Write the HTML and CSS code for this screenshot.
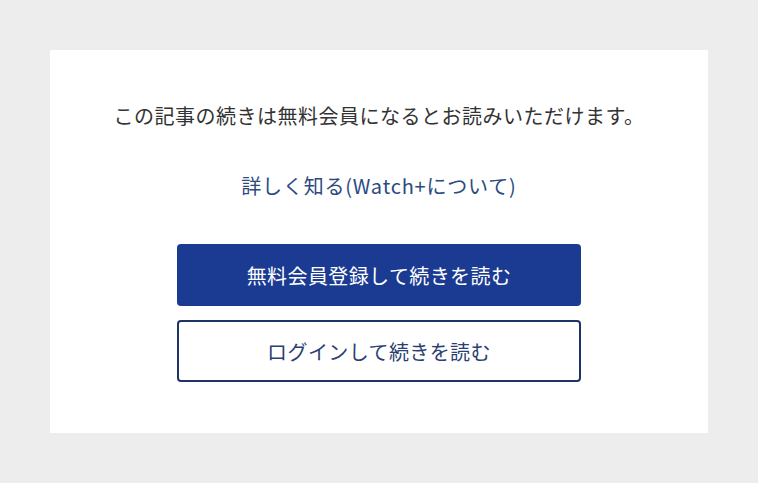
FILE: index.html
```html
<!DOCTYPE html>
<html lang="ja">
<head>
  <meta charset="UTF-8">
  <meta name="viewport" content="width=device-width, initial-scale=1.0">
  <title>続きを読む</title>
  <link rel="stylesheet" href="styles.css">
</head>
<body>
  <div class="paywall">
    <p class="lead">この記事の続きは無料会員になるとお読みいただけます。</p>
    <a class="more" href="#">詳しく知る(Watch+について)</a>
    <div class="actions">
      <a class="btn btn-primary" href="#">無料会員登録して続きを読む</a>
      <a class="btn btn-outline" href="#">ログインして続きを読む</a>
    </div>
  </div>
</body>
</html>
```

FILE: styles.css
```css
body {
  margin: 0;
  padding: 50px;
  background-color: #ededed;
  font-family: "Noto Sans CJK JP", "Noto Sans", sans-serif;
}
.paywall {
  width: 658px;
  height: 383px;
  box-sizing: border-box;
  background-color: #fff;
  padding-top: 51px;
  display: flex;
  flex-direction: column;
  align-items: center;
}
.lead {
  margin: 0;
  font-size: 20px;
  line-height: 30px;
  letter-spacing: 0.5px;
  color: #333;
}
.more {
  margin-top: 40px;
  font-size: 20px;
  line-height: 30px;
  letter-spacing: 0.8px;
  color: #2b4a80;
  text-decoration: none;
}
.actions {
  margin-top: 43px;
  display: flex;
  flex-direction: column;
  gap: 14px;
}
.btn {
  width: 404px;
  height: 62px;
  box-sizing: border-box;
  border-radius: 4px;
  display: flex;
  align-items: center;
  justify-content: center;
  font-size: 20px;
  letter-spacing: 0.4px;
  text-decoration: none;
}
.btn-primary {
  background-color: #1b3b92;
  color: #fff;
}
.btn-outline {
  border: 2px solid #1f3466;
  color: #2b3f72;
}
```
